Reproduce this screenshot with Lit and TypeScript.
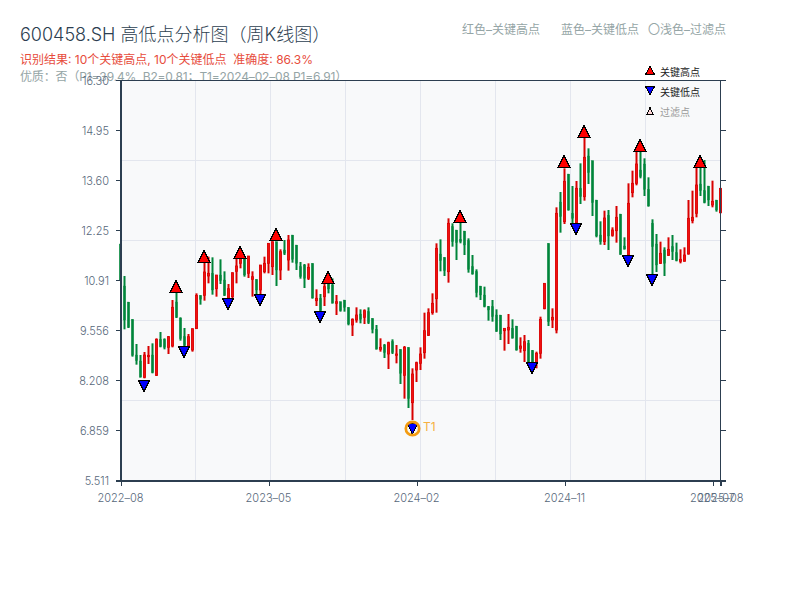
import { LitElement, html, css, svg } from "lit";
import { customElement } from "lit/decorators.js";

type Row = [number, number, number, number, string];

// Each candle: wick top, wick bottom, body top, body bottom in image-scale units (3 per px), colour.
const seg3: Row[] = [
  [42, 150, 42, 150, "g"], [138, 298, 168, 270, "g"], [216, 294, 216, 292, "g"], [268, 380, 268, 376, "g"],
  [342, 404, 375, 392, "g"], [375, 442, 393, 442, "g"], [366, 445, 375, 442, "r"], [348, 402, 376, 380, "r"],
  [340, 430, 375, 428, "g"], [325, 438, 328, 436, "r"], [306, 352, 328, 350, "g"], [325, 358, 328, 352, "g"],
  [318, 372, 320, 352, "r"], [210, 352, 232, 348, "r"], [186, 264, 216, 262, "g"], [262, 332, 264, 326, "g"],
  [294, 350, 320, 346, "g"], [312, 350, 320, 348, "r"], [296, 365, 296, 360, "r"], [190, 296, 196, 296, "r"],
  [196, 224, 196, 208, "g"], [97, 212, 126, 196, "r"], [80, 160, 130, 138, "r"], [82, 194, 130, 180, "g"],
  [135, 200, 135, 176, "r"], [88, 162, 135, 152, "g"], [124, 198, 150, 196, "g"], [162, 205, 176, 205, "r"],
  [128, 205, 128, 200, "r"], [85, 160, 108, 124, "r"], [85, 115, 85, 100, "r"], [85, 140, 85, 135, "g"],
  [78, 144, 78, 130, "r"], [124, 200, 140, 148, "r"], [148, 195, 148, 180, "g"],
];
const seg4: Row[] = [
  [135, 225, 135, 210, "r"], [110, 160, 130, 155, "r"], [70, 160, 70, 130, "r"], [65, 165, 65, 140, "r"],
  [65, 198, 65, 150, "g"], [88, 180, 95, 150, "r"], [60, 105, 90, 100, "g"], [45, 152, 60, 120, "r"],
  [45, 128, 45, 118, "g"], [75, 150, 75, 130, "g"], [126, 176, 140, 170, "g"], [132, 204, 135, 175, "g"],
  [130, 180, 142, 175, "r"], [130, 236, 130, 234, "g"], [208, 258, 235, 242, "r"], [222, 275, 235, 272, "g"],
  [190, 258, 200, 230, "r"], [175, 220, 190, 207, "g"], [175, 250, 195, 250, "g"], [225, 285, 245, 250, "r"],
  [245, 275, 245, 272, "g"], [240, 275, 240, 262, "g"], [262, 316, 262, 312, "g"], [295, 348, 298, 315, "r"],
  [262, 308, 285, 300, "r"], [268, 310, 282, 298, "g"], [268, 312, 272, 292, "r"], [262, 312, 275, 308, "g"],
  [295, 340, 295, 328, "g"], [315, 388, 328, 388, "g"], [355, 395, 382, 388, "r"], [372, 414, 375, 398, "g"],
  [365, 447, 368, 402, "r"], [358, 402, 365, 398, "g"], [375, 430, 402, 406, "r"],
];
const seg5: Row[] = [
  [448, 552, 448, 520, "g"], [438, 596, 442, 526, "r"], [442, 624, 442, 596, "g"], [505, 660, 522, 608, "r"],
  [485, 546, 488, 510, "r"], [442, 510, 462, 490, "r"], [338, 476, 392, 458, "r"], [325, 408, 338, 406, "r"],
  [280, 344, 310, 338, "r"], [130, 338, 145, 296, "r"], [118, 214, 162, 182, "g"], [172, 228, 172, 212, "g"],
  [55, 248, 70, 215, "r"], [70, 140, 80, 125, "g"], [90, 180, 90, 128, "g"], [68, 130, 118, 125, "g"],
  [93, 165, 93, 135, "g"], [115, 218, 122, 208, "g"], [165, 224, 200, 222, "g"], [208, 292, 215, 278, "g"],
  [258, 300, 258, 285, "g"], [260, 322, 285, 320, "g"], [318, 362, 320, 330, "g"], [300, 365, 320, 350, "g"],
  [328, 395, 345, 395, "g"], [345, 420, 345, 402, "g"], [385, 452, 385, 392, "r"], [342, 432, 382, 390, "r"],
  [358, 415, 385, 415, "g"], [378, 452, 378, 450, "g"], [412, 458, 438, 445, "r"], [405, 486, 425, 452, "r"],
  [420, 486, 430, 486, "g"], [450, 490, 452, 486, "g"], [455, 505, 460, 490, "r"], [350, 476, 358, 460, "r"],
  [250, 328, 250, 326, "r"], [130, 378, 130, 365, "g"], [325, 384, 352, 360, "r"],
];
const seg6: Row[] = [
  [262, 640, 280, 630, "r"], [216, 338, 246, 290, "g"], [145, 312, 184, 305, "r"], [162, 272, 162, 270, "g"],
  [198, 310, 280, 295, "g"], [183, 310, 205, 308, "r"], [130, 252, 205, 230, "g"], [52, 242, 112, 230, "r"],
  [85, 192, 108, 158, "g"], [122, 288, 122, 248, "g"], [240, 352, 240, 348, "g"], [304, 374, 345, 365, "g"],
  [272, 375, 294, 365, "r"], [270, 390, 286, 348, "g"], [322, 350, 330, 346, "r"], [258, 368, 292, 332, "r"],
  [282, 404, 282, 404, "g"], [352, 388, 378, 388, "g"], [190, 410, 250, 405, "r"], [152, 232, 190, 218, "r"],
  [95, 196, 132, 190, "r"], [95, 175, 150, 170, "g"], [115, 228, 132, 208, "g"], [172, 260, 208, 258, "g"],
  [298, 462, 310, 380, "g"], [342, 456, 372, 435, "g"], [365, 432, 400, 430, "r"], [382, 468, 390, 430, "g"],
  [352, 408, 388, 406, "r"], [345, 420, 380, 395, "g"], [368, 424, 398, 422, "g"], [388, 430, 418, 424, "r"],
  [382, 424, 405, 424, "r"], [240, 404, 295, 402, "r"], [212, 310, 292, 302, "r"], [142, 292, 195, 280, "r"],
  [142, 228, 192, 212, "g"], [120, 250, 212, 248, "g"], [198, 258, 198, 240, "g"], [182, 262, 244, 255, "r"],
  [240, 275, 240, 270, "g"], [205, 280, 205, 278, "r"],
];

const place = (rows: Row[], origin: number) =>
  rows.map(([a, b, c, d, k]) => [origin + a / 3, origin + b / 3, origin + c / 3, origin + d / 3, k] as Row);

const candles: Row[] = [
  ...place(seg3, 230),
  ...place(seg4, 220),
  ...place(seg5, 200),
  ...place(seg6, 120),
];

const highs: [number, number][] = [
  [176, 280], [204, 250], [240, 246], [276, 228], [328, 271],
  [460, 210], [564, 155], [584, 125], [640, 139], [700, 155],
];
const lows: [number, number][] = [
  [144, 380], [184, 346], [228, 298], [260, 294], [320, 311],
  [532, 362], [576, 223], [628, 255], [652, 274],
];

const yTicks: [number, string][] = [
  [81, "16.30"], [131, "14.95"], [181, "13.60"], [231, "12.25"], [281, "10.91"],
  [331, "9.556"], [381, "8.208"], [431, "6.859"], [481, "5.511"],
];
const xTicks: [number, string][] = [
  [121, "2022–08"], [269, "2023–05"], [417, "2024–02"], [565, "2024–11"], [713, "2025–07"], [721, "2025–08"],
];
const hGrid = [160, 240, 320, 400];
const vGrid = [195, 270, 345, 420, 495, 570, 645];

@customElement("app-root")
export class AppRoot extends LitElement {
  static styles = css`
    :host {
      display: block;
      position: relative;
      width: 800px;
      height: 600px;
      background: #fff;
      overflow: hidden;
      font-family: Inter, "Noto Sans CJK SC", sans-serif;
    }
    .head {
      display: flex;
      flex-direction: column;
      padding: 23px 0 0 20px;
    }
    .title {
      font-size: 18px;
      font-weight: 300;
      line-height: 24px;
      color: #2c3e50;
      white-space: pre;
    }
    .result {
      font-size: 12px;
      line-height: 16px;
      margin-top: 5px;
      color: #e74c3c;
      white-space: pre;
    }
    .quality {
      font-size: 12px;
      line-height: 16px;
      margin-top: 1px;
      color: #95a5a6;
      letter-spacing: -0.14px;
      white-space: pre;
    }
    .legend {
      position: absolute;
      top: 22px;
      left: 462px;
      display: flex;
      gap: 21px;
      font-size: 12px;
      line-height: 16px;
      color: #95a5a6;
      white-space: pre;
    }
    .legend .tight {
      margin-left: -12px;
    }
    .chart {
      position: absolute;
      inset: 0;
      width: 800px;
      height: 600px;
    }
    .plot { fill: #f8f9fa; }
    .grid { stroke: #e3e6ee; stroke-width: 1; }
    .axis { stroke: #2c3e50; fill: none; }
    .lbl { font-size: 11px; fill: #56677a; font-weight: 300; }
    .yl { text-anchor: end; }
    .xl { text-anchor: middle; }
    .lg { font-size: 10px; fill: #222; }
    .lg.dim { fill: #999; }
    .t1 { font-size: 12px; fill: #f5b041; }
    .wr { stroke: #d80000; stroke-width: 2; }
    .wg { stroke: #00853a; stroke-width: 2; }
    .br { fill: #f01010; stroke: #d80000; stroke-width: 0.8; }
    .bg { fill: #00853a; stroke: #00853a; stroke-width: 0.3; }
    .hi { fill: #ff0000; stroke: #000; stroke-width: 1; shape-rendering: crispEdges; }
    .lo { fill: #0000ff; stroke: #000; stroke-width: 1; shape-rendering: crispEdges; }
    .fl { fill: #ffd6d6; stroke: #000; stroke-width: 1; shape-rendering: crispEdges; }
    .ring { fill: none; stroke: #f39c12; stroke-width: 2.7; }
  `;

  private candle(r: Row, i: number) {
    const x = 120.5 + 4 * i;
    const [wt, wb, bt, bb, k] = r;
    return svg`
      <line class=${k === "r" ? "wr" : "wg"} x1=${x} x2=${x} y1=${wt} y2=${wb}></line>
      <rect class=${k === "r" ? "br" : "bg"} x=${x - 1} y=${bt} width="2" height=${Math.max(bb - bt, 1)}></rect>
    `;
  }

  private up(x: number, top: number, w = 11.5, h = 11.5, cls = "hi") {
    return svg`<polygon class=${cls} points="${x},${top} ${x + w / 2},${top + h} ${x - w / 2},${top + h}"></polygon>`;
  }

  private down(x: number, base: number, w = 11.5, h = 11.5) {
    return svg`<polygon class="lo" points="${x - w / 2},${base} ${x + w / 2},${base} ${x},${base + h}"></polygon>`;
  }

  render() {
    return html`
      <div class="head">
        <div class="title">600458.SH 高低点分析图（周K线图）</div>
        <div class="result">识别结果: 10个关键高点, 10个关键低点  准确度: 86.3%</div>
        <div class="quality">优质：否（P1=39.4%  B2=0.81；T1=2024–02–08 P1=6.91）</div>
      </div>
      <div class="legend">
        <span>红色–关键高点</span>
        <span>蓝色–关键低点</span>
        <span class="tight">〇浅色–过滤点</span>
      </div>
      <svg class="chart" viewBox="0 0 800 600">
        <rect class="plot" x="121" y="81" width="600" height="400"></rect>
        ${hGrid.map((y) => svg`<line class="grid" x1="121" x2="721" y1=${y + 0.5} y2=${y + 0.5}></line>`)}
        ${vGrid.map((x) => svg`<line class="grid" x1=${x + 0.5} x2=${x + 0.5} y1="81" y2="481"></line>`)}
        ${candles.map((c, i) => this.candle(c, i))}

        <line class="axis" stroke-width="1" x1="116" x2="726" y1="80.5" y2="80.5"></line>
        <line class="axis" stroke-width="2" x1="121" x2="121" y1="80" y2="482"></line>
        <line class="axis" stroke-width="1" x1="720.5" x2="720.5" y1="80" y2="486"></line>
        <line class="axis" stroke-width="2" x1="116" x2="726" y1="481" y2="481"></line>
        ${yTicks.map(([y]) => svg`
          <line class="axis" stroke-width="1" x1="116" x2="121" y1=${y - 0.5} y2=${y - 0.5}></line>
          <line class="axis" stroke-width="1" x1="721" x2="726" y1=${y - 0.5} y2=${y - 0.5}></line>
        `)}
        ${xTicks.map(([x]) => svg`<line class="axis" stroke-width="1" x1=${x + 0.5} x2=${x + 0.5} y1="481" y2="486"></line>`)}
        ${yTicks.map(([y, t]) => svg`<text class="lbl yl" x="109" y=${y + 4}>${t}</text>`)}
        ${xTicks.map(([x, t]) => svg`<text class="lbl xl" x=${x - 0.5} y="502">${t}</text>`)}

        ${highs.map(([x, y]) => this.up(x, y + 0.5))}
        ${lows.map(([x, y]) => this.down(x, y))}

        ${this.down(412.5, 423.5, 10, 11)}
        <circle class="ring" cx="412.5" cy="428.5" r="6.7"></circle>
        <text class="t1" x="423" y="431">T1</text>

        ${this.up(650, 66.5, 9, 8)}
        <text class="lg" x="660" y="76">关键高点</text>
        ${this.down(650, 86.5, 9, 8)}
        <text class="lg" x="660" y="96">关键低点</text>
        ${this.up(650, 107.5, 6, 7, "fl")}
        <text class="lg dim" x="660" y="116">过滤点</text>
      </svg>
    `;
  }
}
